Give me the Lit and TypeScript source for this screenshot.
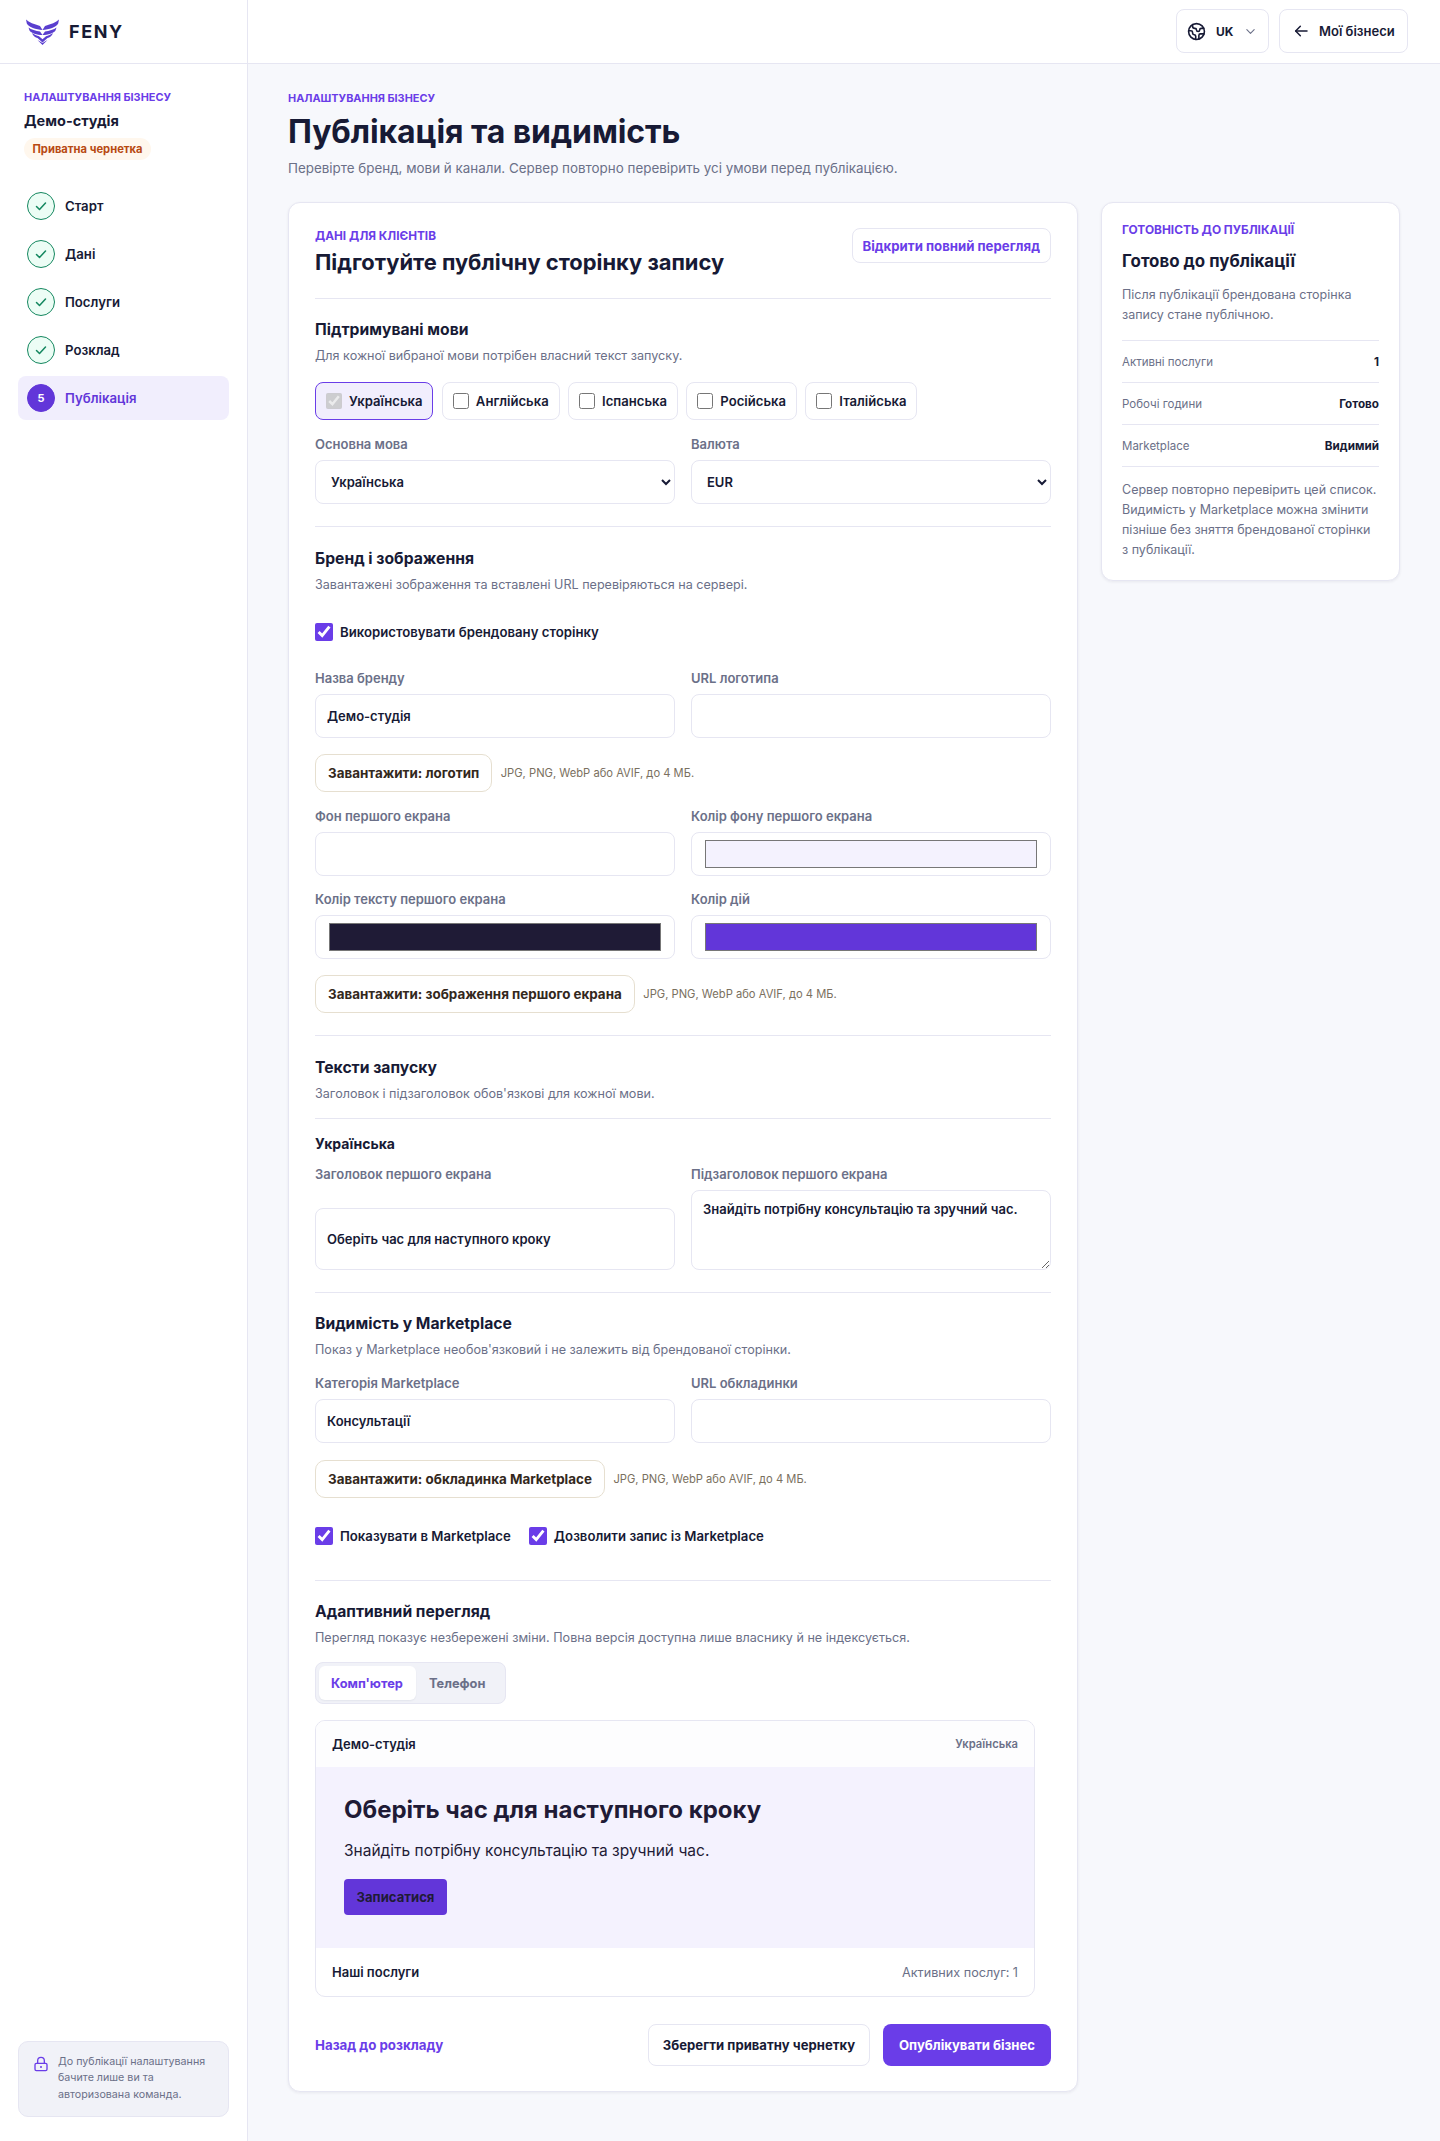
import { LitElement, html, css } from "lit";
import { customElement } from "lit/decorators.js";

const check = html`<svg viewBox="0 0 16 16" width="16" height="16" fill="none" stroke="currentColor" stroke-width="1.5" stroke-linecap="round" stroke-linejoin="round"><path d="M3.5 8.5l3 3 6-6.5"/></svg>`;

@customElement("app-root")
export class AppRoot extends LitElement {
  static styles = css`
    :host { display: block; font-family: Inter, "Noto Sans", sans-serif; color: #171a35; --p: #6a3de8; --line: #e6e6f2; --muted: #6b7088; }
    * { box-sizing: border-box; }
    .shell { display: grid; grid-template-columns: 248px 1fr; grid-template-rows: 64px 1fr; min-height: 100vh; background: #f7f8fc; }
    .brand { background: #fff; border-right: 1px solid var(--line); border-bottom: 1px solid var(--line); display: flex; align-items: center; padding-left: 26px; gap: 10px; }
    .brand b { font-size: 18px; font-weight: 700; letter-spacing: 1.6px; }
    .top { background: #fff; border-bottom: 1px solid var(--line); display: flex; justify-content: flex-end; align-items: center; gap: 10px; padding: 0 32px 1px 0; }
    .tbtn { height: 44px; border: 1px solid var(--line); border-radius: 8px; background: #fff; display: flex; align-items: center; font-size: 13px; font-weight: 600; color: #171a35; }
    .lang { width: 93px; padding-left: 10px; gap: 10px; font-size: 12px; font-weight: 700; }
    .lang .chev { margin-left: 2px; color: #6b7088; }
    .back { width: 129px; padding-left: 13px; gap: 10px; }

    .side { background: #fff; border-right: 1px solid var(--line); padding: 26px 18px 24px; display: flex; flex-direction: column; }
    .eyebrow { font-size: 10.9px; line-height: 14px; font-weight: 700; color: var(--p); text-transform: uppercase; }
    .side .eyebrow { margin-left: 6px; }
    .biz { margin: 7px 0 0 6px; font-size: 14.5px; line-height: 20px; font-weight: 700; }
    .pill { align-self: flex-start; margin: 7px 0 0 6px; height: 22px; padding: 0 8.5px; border-radius: 11px; background: #fff7ed; color: #b84a12; font-size: 11.2px; font-weight: 700; display: flex; align-items: center; }
    .steps { margin-top: 24px; display: grid; gap: 4px; }
    .step { height: 44px; border-radius: 8px; display: flex; align-items: center; gap: 10px; padding-left: 9px; font-size: 13.2px; font-weight: 600; }
    .dot { width: 28px; height: 28px; border-radius: 50%; display: flex; align-items: center; justify-content: center; background: #ecfdf5; border: 1.5px solid #14875f; color: #14875f; font-size: 11px; font-weight: 700; }
    .step.on { background: #f1eefd; color: #6236d9; }
    .step.on .dot { background: #6236d9; border-color: #6236d9; color: #fff; }
    .note { margin-top: auto; height: 76px; border: 1px solid var(--line); background: #f1f2f8; border-radius: 10px; padding: 12px 10px 12px 14px; display: flex; gap: 9px; font-size: 10.7px; line-height: 16.4px; color: var(--muted); }
    .note svg { flex: none; color: var(--p); margin-top: 2px; }

    .main { padding: 27px 40px 48px; min-width: 0; }
    .main > .eyebrow { font-size: 10.9px; }
    h1 { margin: 7px 0 0; font-size: 32px; line-height: 40px; font-weight: 700; letter-spacing: -0.1px; }
    .lead { margin: 5px 0 0; font-size: 13.4px; line-height: 22px; color: var(--muted); }
    .cols { margin-top: 23px; display: grid; grid-template-columns: 790px 299px; gap: 23px; align-items: start; }
    .card { background: #fff; border: 1px solid var(--line); border-radius: 12px; box-shadow: 0 1px 3px rgba(23, 26, 53, .07); }
    .form { padding: 26px 26px 25px; }
    .head { display: flex; justify-content: space-between; align-items: flex-start; padding-bottom: 22px; border-bottom: 1px solid var(--line); }
    .head .eyebrow { font-size: 11.8px; line-height: 14px; }
    .head h2 { margin: 5px 0 0; font-size: 21.9px; line-height: 28px; font-weight: 700; }
    .open { height: 35px; margin-top: -1px; padding: 0 10px; border: 1px solid var(--line); border-radius: 8px; background: #fff; color: var(--p); font: 700 13.2px Inter, sans-serif; }
    section { padding: 21px 0 22px; border-bottom: 1px solid var(--line); display: grid; gap: 16px; }
    section.pt { padding-top: 22px; }
    section.g { gap: 17px; }
    section.last { border-bottom: 0; padding-bottom: 0; }
    .sh h3 { margin: 0; font-size: 15.7px; line-height: 20px; font-weight: 700; }
    .sh p { margin: 6px 0 0; font-size: 12.6px; line-height: 19px; color: var(--muted); }
    .chips { display: flex; gap: 8.4px; }
    .chip { height: 38px; padding: 0 10px; border: 1px solid var(--line); border-radius: 8px; display: flex; align-items: center; gap: 7px; font-size: 13.1px; font-weight: 600; background: #fff; }
    .chip.on { border-color: var(--p); background: #f1eefd; }
    .chip input { width: 16px; height: 16px; margin: 0; accent-color: var(--p); }
    .grid { display: grid; grid-template-columns: 1fr 1fr; gap: 16px; }
    .field { display: grid; gap: 8px; min-width: 0; }
    label.l { margin-top: -1px; font-size: 13px; line-height: 16px; font-weight: 600; color: var(--muted); }
    .ctl { width: 100%; height: 44px; border: 1px solid var(--line); border-radius: 8px; background: #fff; font: 600 13px/18px Inter, sans-serif; color: #171a35; padding: 0 11px; outline: none; }
    .stretch { height: auto; padding: 12px 11px; }
    select.ctl { padding: 0 0 0 11px; }
    input[type="color"].ctl { padding: 3px 11px; }
    textarea.ctl { height: 80px; padding: 9px 11px; resize: vertical; display: block; }
    .up { display: flex; align-items: center; gap: 8.5px; }
    .upb { height: 38px; padding: 0 12px; border: 1px solid #e6dfd0; border-radius: 10px; background: #fff; color: #33281c; font: 700 13.4px Inter, sans-serif; }
    .hint { font-size: 11.2px; color: #7a7060; }
    .ck { display: flex; align-items: center; gap: 7px; font-size: 13.2px; font-weight: 600; height: 20px; }
    .ck input { width: 18px; height: 18px; margin: 0; accent-color: var(--p); }
    .ckrow { display: flex; gap: 18px; }
    .m1 { margin: 12px 0 13px; }
    .m2 { margin: 11px 0 12px; }
    .mt1 { margin-top: 1px; }
    .sub { border-top: 1px solid var(--line); margin-top: -1px; padding-top: 15px; display: grid; gap: 13px; }
    .sub h4 { margin: 0; font-size: 14px; line-height: 20px; font-weight: 700; }
    .seg { justify-self: start; display: flex; height: 42px; padding: 3px; border: 1px solid var(--line); border-radius: 8px; background: #f1f2f8; width: 191px; margin-top: -1px; }
    .seg span { display: flex; align-items: center; padding: 0 12px; font-size: 12.8px; font-weight: 700; color: var(--muted); }
    .seg .a { background: #fff; color: var(--p); border-radius: 6px; box-shadow: 0 1px 2px rgba(23, 26, 53, .06); width: 97px; }
    .seg .b { padding-left: 13px; }
    .pv { width: 720px; border: 1px solid var(--line); border-radius: 10px; overflow: hidden; }
    .pvh { height: 46px; display: flex; align-items: center; justify-content: space-between; padding: 0 16px; font-size: 13px; font-weight: 600; background: #fdfdfe; }
    .pvh small { font-size: 11.2px; font-weight: 600; color: var(--muted); }
    .hero { height: 181px; background: #f4f2fe; padding: 28px; color: #1f1b36; }
    .hero h3 { margin: 0; font-size: 24px; line-height: 30px; font-weight: 700; }
    .hero p { margin: 14px 0 0; font-size: 15.5px; line-height: 24px; }
    .hero button { display: block; margin-top: 16px; height: 36px; width: 103px; border: 0; border-radius: 4px; background: #6236d9; color: #1f1b36; font: 700 13.1px Inter, sans-serif; }
    .pvf { height: 48px; display: flex; align-items: center; justify-content: space-between; padding: 0 16px; font-size: 13px; font-weight: 600; }
    .pvf small { font-size: 12.65px; font-weight: 400; color: var(--muted); }
    .acts { display: flex; align-items: center; gap: 13px; margin-top: 11px; }
    .acts a { margin-right: auto; color: var(--p); font-size: 13.3px; font-weight: 700; }
    .acts button { height: 42px; border-radius: 8px; font: 700 13.1px Inter, sans-serif; }
    .save { width: 222px; background: #fff; border: 1px solid var(--line); color: #171a35; }
    .pub { width: 168px; background: var(--p); border: 0; color: #fff; }

    .aside { padding: 20px; }
    .aside .eyebrow { font-size: 11.9px; }
    .aside h2 { margin: 12px 0 0; font-size: 16.9px; line-height: 24px; font-weight: 700; }
    .aside p { margin: 12px 0 0; font-size: 12.5px; line-height: 20px; color: var(--muted); }
    .rows { margin-top: 15px; border-top: 1px solid var(--line); }
    .row { height: 42px; display: flex; align-items: center; justify-content: space-between; border-bottom: 1px solid var(--line); font-size: 11.5px; color: var(--muted); }
    .row b { font-size: 11.7px; font-weight: 700; color: #171a35; }
    .aside p.end { margin-top: 13px; }
  `;

  private lang(n: string, on = false) {
    return html`<label class="chip ${on ? "on" : ""}"><input type="checkbox" ?checked=${on} ?disabled=${on} />${n}</label>`;
  }
  private input(label: string, value = "") {
    return html`<div class="field"><label class="l">${label}</label><input class="ctl" .value=${value} /></div>`;
  }
  private color(label: string, value: string) {
    return html`<div class="field"><label class="l">${label}</label><input class="ctl" type="color" .value=${value} /></div>`;
  }
  private upload(t: string) {
    return html`<div class="up"><button class="upb">Завантажити: ${t}</button><span class="hint">JPG, PNG, WebP або AVIF, до 4 МБ.</span></div>`;
  }
  private step(n: string, i: number, on = false) {
    return html`<div class="step ${on ? "on" : ""}"><span class="dot">${on ? i : check}</span>${n}</div>`;
  }

  render() {
    return html`<div class="shell">
      <div class="brand">
        <svg width="33" height="26" viewBox="0 0 33 26" fill="#5a3fcf">
          <path d="M0 .5C3 3.500 8 5 14 7l2.500 4C10 10.500 2.500 8 .8 4.500Z"/>
          <path d="M33 .5C30 3.500 25 5 19 7l-2.500 4C23 10.500 30.500 8 32.200 4.500Z"/>
          <path d="M2.500 8.500C5 10.500 10 12 14 12.500l2.500 3.500C11 16 5 14 3.500 11.500Z"/>
          <path d="M30.500 8.500C28 10.500 23 12 19 12.500L16.500 16C22 16 28 14 29.500 11.500Z"/>
          <path d="M6 14c2 1.500 5 2.800 7 3.200l3.500 3 3.500-3c2-.4 5-1.700 7-3.200-1 3-3.500 4.500-5.500 5L16.500 23.500 11.500 19C9.500 18.500 7 17 6 14Z"/>
          <path d="M11.500 21l5 3 5-3-5 5Z"/>
        </svg>
        <b>FENY</b>
      </div>
      <div class="top">
        <div class="tbtn lang">
          <svg width="19" height="19" viewBox="0 0 24 24" fill="none" stroke="currentColor" stroke-width="2" stroke-linecap="round" stroke-linejoin="round"><path d="M21.54 15H17a2 2 0 0 0-2 2v4.54"/><path d="M7 3.34V5a3 3 0 0 0 3 3a2 2 0 0 1 2 2c0 1.100.9 2 2 2a2 2 0 0 0 2-2c0-1.100.9-2 2-2h3.170"/><path d="M11 21.950V18a2 2 0 0 0-2-2a2 2 0 0 1-2-2v-1a2 2 0 0 0-2-2H2.050"/><circle cx="12" cy="12" r="10"/></svg>
          UK
          <svg class="chev" width="11" height="11" viewBox="0 0 12 12" fill="none" stroke="currentColor" stroke-width="1.200" stroke-linecap="round" stroke-linejoin="round"><path d="M2 4l4 4 4-4"/></svg>
        </div>
        <div class="tbtn back">
          <svg width="16" height="16" viewBox="0 0 24 24" fill="none" stroke="currentColor" stroke-width="2.200" stroke-linecap="round" stroke-linejoin="round"><path d="M11 19l-7-7 7-7"/><path d="M21 12H4"/></svg>
          Мої бізнеси
        </div>
      </div>
      <aside class="side">
        <div class="eyebrow">Налаштування бізнесу</div>
        <div class="biz">Демо-студія</div>
        <div class="pill">Приватна чернетка</div>
        <div class="steps">
          ${this.step("Старт", 1)}${this.step("Дані", 2)}${this.step("Послуги", 3)}${this.step("Розклад", 4)}${this.step("Публікація", 5, true)}
        </div>
        <div class="note">
          <svg width="16" height="16" viewBox="0 0 24 24" fill="none" stroke="currentColor" stroke-width="2" stroke-linecap="round" stroke-linejoin="round"><rect x="3" y="11" width="18" height="11" rx="2"/><path d="M7 11V7a5 5 0 0 1 10 0v4"/><circle cx="12" cy="16.500" r=".6"/></svg>
          <span>До публікації налаштування бачите лише ви та авторизована команда.</span>
        </div>
      </aside>
      <main class="main">
        <div class="eyebrow">Налаштування бізнесу</div>
        <h1>Публікація та видимість</h1>
        <p class="lead">Перевірте бренд, мови й канали. Сервер повторно перевірить усі умови перед публікацією.</p>
        <div class="cols">
          <div class="card form">
            <div class="head">
              <div>
                <div class="eyebrow">Дані для клієнтів</div>
                <h2>Підготуйте публічну сторінку запису</h2>
              </div>
              <button class="open">Відкрити повний перегляд</button>
            </div>
            <section class="g">
              <div class="sh"><h3>Підтримувані мови</h3><p>Для кожної вибраної мови потрібен власний текст запуску.</p></div>
              <div class="chips">
                ${this.lang("Українська", true)}${this.lang("Англійська")}${this.lang("Іспанська")}${this.lang("Російська")}${this.lang("Італійська")}
              </div>
              <div class="grid">
                <div class="field"><label class="l">Основна мова</label><select class="ctl"><option>Українська</option></select></div>
                <div class="field"><label class="l">Валюта</label><select class="ctl"><option>EUR</option></select></div>
              </div>
            </section>
            <section class="pt">
              <div class="sh"><h3>Бренд і зображення</h3><p>Завантажені зображення та вставлені URL перевіряються на сервері.</p></div>
              <label class="ck m1"><input type="checkbox" checked />Використовувати брендовану сторінку</label>
              <div class="grid">${this.input("Назва бренду", "Демо-студія")}${this.input("URL логотипа")}</div>
              ${this.upload("логотип")}
              <div class="grid mt1">
                ${this.input("Фон першого екрана")}${this.color("Колір фону першого екрана", "#f4f2fe")}
                ${this.color("Колір тексту першого екрана", "#1f1b36")}${this.color("Колір дій", "#6236d9")}
              </div>
              ${this.upload("зображення першого екрана")}
            </section>
            <section class="pt">
              <div class="sh"><h3>Тексти запуску</h3><p>Заголовок і підзаголовок обов'язкові для кожної мови.</p></div>
              <div class="sub">
                <h4>Українська</h4>
                <div class="grid">
                  <div class="field"><label class="l">Заголовок першого екрана</label><input class="ctl stretch" .value=${"Оберіть час для наступного кроку"} /></div>
                  <div class="field"><label class="l">Підзаголовок першого екрана</label><textarea class="ctl" .value=${"Знайдіть потрібну консультацію та зручний час."}></textarea></div>
                </div>
              </div>
            </section>
            <section class="g">
              <div class="sh"><h3>Видимість у Marketplace</h3><p>Показ у Marketplace необов'язковий і не залежить від брендованої сторінки.</p></div>
              <div class="grid">${this.input("Категорія Marketplace", "Консультації")}${this.input("URL обкладинки")}</div>
              ${this.upload("обкладинка Marketplace")}
              <div class="ckrow m2">
                <label class="ck"><input type="checkbox" checked />Показувати в Marketplace</label>
                <label class="ck"><input type="checkbox" checked />Дозволити запис із Marketplace</label>
              </div>
            </section>
            <section class="last">
              <div class="sh"><h3>Адаптивний перегляд</h3><p>Перегляд показує незбережені зміни. Повна версія доступна лише власнику й не індексується.</p></div>
              <div class="seg"><span class="a">Комп'ютер</span><span class="b">Телефон</span></div>
              <div class="pv">
                <div class="pvh"><span>Демо-студія</span><small>Українська</small></div>
                <div class="hero">
                  <h3>Оберіть час для наступного кроку</h3>
                  <p>Знайдіть потрібну консультацію та зручний час.</p>
                  <button>Записатися</button>
                </div>
                <div class="pvf"><span>Наші послуги</span><small>Активних послуг: 1</small></div>
              </div>
              <div class="acts">
                <a>Назад до розкладу</a>
                <button class="save">Зберегти приватну чернетку</button>
                <button class="pub">Опублікувати бізнес</button>
              </div>
            </section>
          </div>
          <div class="card aside">
            <div class="eyebrow">Готовність до публікації</div>
            <h2>Готово до публікації</h2>
            <p>Після публікації брендована сторінка запису стане публічною.</p>
            <div class="rows">
              <div class="row"><span>Активні послуги</span><b>1</b></div>
              <div class="row"><span>Робочі години</span><b>Готово</b></div>
              <div class="row"><span>Marketplace</span><b>Видимий</b></div>
            </div>
            <p class="end">Сервер повторно перевірить цей список. Видимість у Marketplace можна змінити пізніше без зняття брендованої сторінки з публікації.</p>
          </div>
        </div>
      </main>
    </div>`;
  }
}
